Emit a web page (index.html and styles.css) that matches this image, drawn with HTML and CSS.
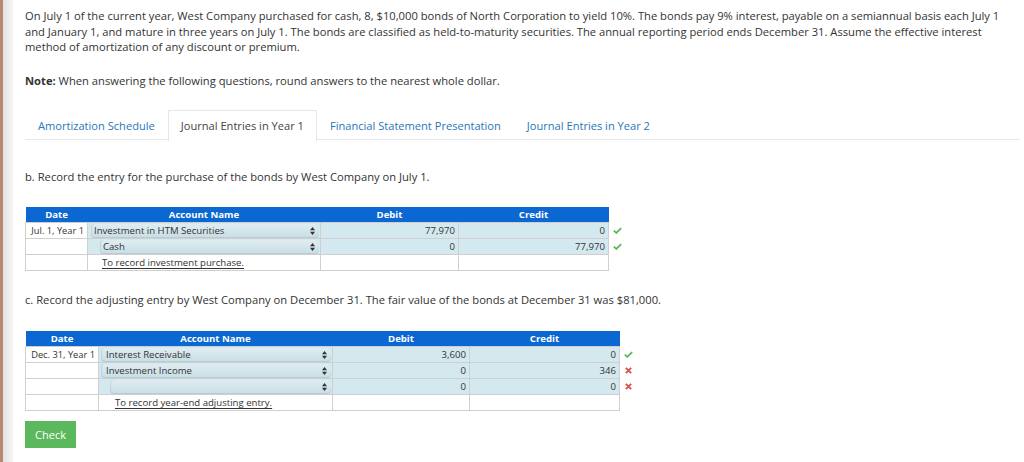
FILE: index.html
```html
<!DOCTYPE html>
<html>
<head>
<meta charset="utf-8">
<link rel="stylesheet" href="styles.css">
</head>
<body>
<div class="frame">
  <div class="edge"></div>
  <div class="content">
    <p class="intro">On July 1 of the current year, West Company purchased for cash, 8, $10,000 bonds of North Corporation to yield 10%. The bonds pay 9% interest, payable on a semiannual basis each July 1 and January 1, and mature in three years on July 1. The bonds are classified as held-to-maturity securities. The annual reporting period ends December 31. Assume the effective interest method of amortization of any discount or premium.</p>
    <p class="note"><b>Note:</b> When answering the following questions, round answers to the nearest whole dollar.</p>

    <div class="tabs">
      <span class="tab">Amortization Schedule</span>
      <span class="tab active">Journal Entries in Year 1</span>
      <span class="tab">Financial Statement Presentation</span>
      <span class="tab">Journal Entries in Year 2</span>
    </div>

    <p class="question q-b">b. Record the entry for the purchase of the bonds by West Company on July 1.</p>

    <table class="journal j1">
      <colgroup><col class="c-date"><col class="c-acct"><col class="c-num"><col class="c-num2"><col class="c-mark"></colgroup>
      <thead>
        <tr><th>Date</th><th>Account Name</th><th>Debit</th><th>Credit</th><th class="mark"></th></tr>
      </thead>
      <tbody>
        <tr>
          <td class="date">Jul. 1, Year 1</td>
          <td class="acct"><div class="select">Investment in HTM Securities<svg class="arrows" viewBox="0 0 5 8"><path d="M0 3.2L2.5 0L5 3.2Z M0 4.8L2.5 8L5 4.8Z"/></svg></div></td>
          <td class="num">77,970</td>
          <td class="num">0</td>
          <td class="mark"><svg class="ok" viewBox="0 0 10 8"><path d="M0.8 4.2L3.6 6.8L9.2 1.2"/></svg></td>
        </tr>
        <tr>
          <td class="date"></td>
          <td class="acct"><div class="select indent">Cash<svg class="arrows" viewBox="0 0 5 8"><path d="M0 3.2L2.5 0L5 3.2Z M0 4.8L2.5 8L5 4.8Z"/></svg></div></td>
          <td class="num">0</td>
          <td class="num">77,970</td>
          <td class="mark"><svg class="ok" viewBox="0 0 10 8"><path d="M0.8 4.2L3.6 6.8L9.2 1.2"/></svg></td>
        </tr>
        <tr class="memo">
          <td class="date"></td>
          <td class="memo-text"><span>To record investment purchase.</span></td>
          <td></td>
          <td></td>
          <td class="mark"></td>
        </tr>
      </tbody>
    </table>

    <p class="question q-c">c. Record the adjusting entry by West Company on December 31. The fair value of the bonds at December 31 was $81,000.</p>

    <table class="journal j2">
      <colgroup><col class="c-date"><col class="c-acct"><col class="c-num"><col class="c-num2"><col class="c-mark"></colgroup>
      <thead>
        <tr><th>Date</th><th>Account Name</th><th>Debit</th><th>Credit</th><th class="mark"></th></tr>
      </thead>
      <tbody>
        <tr>
          <td class="date">Dec. 31, Year 1</td>
          <td class="acct"><div class="select">Interest Receivable<svg class="arrows" viewBox="0 0 5 8"><path d="M0 3.2L2.5 0L5 3.2Z M0 4.8L2.5 8L5 4.8Z"/></svg></div></td>
          <td class="num">3,600</td>
          <td class="num">0</td>
          <td class="mark"><svg class="ok" viewBox="0 0 10 8"><path d="M0.8 4.2L3.6 6.8L9.2 1.2"/></svg></td>
        </tr>
        <tr>
          <td class="date"></td>
          <td class="acct"><div class="select">Investment Income<svg class="arrows" viewBox="0 0 5 8"><path d="M0 3.2L2.5 0L5 3.2Z M0 4.8L2.5 8L5 4.8Z"/></svg></div></td>
          <td class="num">0</td>
          <td class="num">346</td>
          <td class="mark"><svg class="bad" viewBox="0 0 8 8"><path d="M1 1L7 7M7 1L1 7"/></svg></td>
        </tr>
        <tr>
          <td class="date"></td>
          <td class="acct"><div class="select indent"><svg class="arrows" viewBox="0 0 5 8"><path d="M0 3.2L2.5 0L5 3.2Z M0 4.8L2.5 8L5 4.8Z"/></svg></div></td>
          <td class="num">0</td>
          <td class="num">0</td>
          <td class="mark"><svg class="bad" viewBox="0 0 8 8"><path d="M1 1L7 7M7 1L1 7"/></svg></td>
        </tr>
        <tr class="memo">
          <td class="date"></td>
          <td class="memo-text"><span>To record year-end adjusting entry.</span></td>
          <td></td>
          <td></td>
          <td class="mark"></td>
        </tr>
      </tbody>
    </table>

    <button class="check">Check</button>
  </div>
</div>
</body>
</html>
```

FILE: styles.css
```css
html, body {
  margin: 0;
  padding: 0;
  background: #fff;
}
body {
  font-family: "Open Sans", "Liberation Sans", sans-serif;
  color: #333;
}
.frame {
  display: flex;
  min-height: 462px;
}
.edge {
  width: 13px;
  flex: none;
  background: linear-gradient(to right, #b48a74 0, #b48a74 3px, #e2e2e2 3px, #f6f6f6 13px);
}
.content {
  flex: 1;
  padding: 8px 12px 0 12px;
}
.intro {
  margin: 0;
  font-size: 11.2px;
  line-height: 15.5px;
}
.note {
  margin: 18px 0 0;
  font-size: 11.2px;
  line-height: 15.5px;
}
.note b {
  font-weight: 700;
}
.tabs {
  margin-top: 22px;
  display: flex;
  border-bottom: 1px solid #e8e8e8;
  height: 29px;
  margin-right: -8px;
}
.tab {
  padding: 0 12px 0 12px;
  font-size: 11.1px;
  line-height: 29px;
  color: #2a76b8;
  border: 1px solid transparent;
  border-bottom: none;
}
.tab.active {
  color: #444;
  border-color: #e6e6e6;
  background: #fff;
  height: 30px;
}
.question {
  margin: 0;
  font-size: 11.2px;
  line-height: 15px;
}
.q-b { margin-top: 29px; }
.q-c { margin-top: 21px; }

.journal {
  border-collapse: collapse;
  table-layout: fixed;
  font-size: 9.6px;
  color: #333;
}
.j1 { margin-top: 23px; width: 613px; }
.j2 { margin-top: 24px; width: 624px; }
.j1 .c-date { width: 62px; }
.j1 .c-acct { width: 233px; }
.j1 .c-num { width: 138px; }
.j1 .c-num2 { width: 150px; }
.j2 .c-date { width: 73px; }
.j2 .c-acct { width: 234px; }
.j2 .c-num { width: 137px; }
.j2 .c-num2 { width: 150px; }
.c-mark { width: 30px; }

.journal th {
  background: #0b67d2;
  color: #fff;
  font-weight: 700;
  font-size: 9.6px;
  height: 15px;
  padding: 0;
  text-align: center;
  line-height: 15px;
}
.journal th.mark {
  background: transparent;
}
.journal td {
  border: 1px solid #cfcfcf;
  height: 15px;
  padding: 0;
  line-height: 15px;
  white-space: nowrap;
  overflow: hidden;
}
.journal td.mark {
  border: none;
  padding-left: 4px;
  line-height: 0;
}
.mark svg {
  fill: none;
  stroke-linecap: butt;
}
.mark .ok {
  width: 9px;
  height: 7px;
  stroke: #5cb85c;
  stroke-width: 2;
}
.mark .bad {
  width: 7px;
  height: 7px;
  stroke: #d9534f;
  stroke-width: 2.2;
  margin-left: 1px;
}
.date {
  text-align: right;
  padding-right: 3px !important;
  background: #fff;
  font-size: 9.3px;
}
.acct {
  background: #d4e9ef;
  padding: 0 1px 0 3px !important;
}
.j2 .acct { padding-left: 2px !important; }
.select {
  position: relative;
  height: 14px;
  line-height: 14px;
  border-radius: 4px;
  background: linear-gradient(to bottom, #dfedf2, #c8dde5);
  box-shadow: inset 0 -1px 0 #b8ccd4, inset 1px 0 0 #c2d4db;
  padding-left: 3px;
  color: #333;
}
.select.indent {
  margin-left: 9px;
}
.j2 .select { padding-left: 5px; }
.arrows {
  position: absolute;
  right: 4px;
  top: 3px;
  width: 5px;
  height: 8px;
  fill: #333;
}
.num {
  text-align: right;
  padding-right: 3px !important;
  background: #d4e9ef;
}
.memo td { background: #fff; }
.memo-text {
  padding-left: 14px !important;
}
.j2 .memo-text { padding-left: 16px !important; }
.memo-text span {
  text-decoration: underline;
  text-underline-offset: 2px;
}
.check {
  display: block;
  margin-top: 10px;
  width: 51px;
  height: 27px;
  border: none;
  background: #5cb85c;
  color: #fff;
  font-family: "Open Sans", "Liberation Sans", sans-serif;
  font-size: 11px;
  padding: 0;
}
```
